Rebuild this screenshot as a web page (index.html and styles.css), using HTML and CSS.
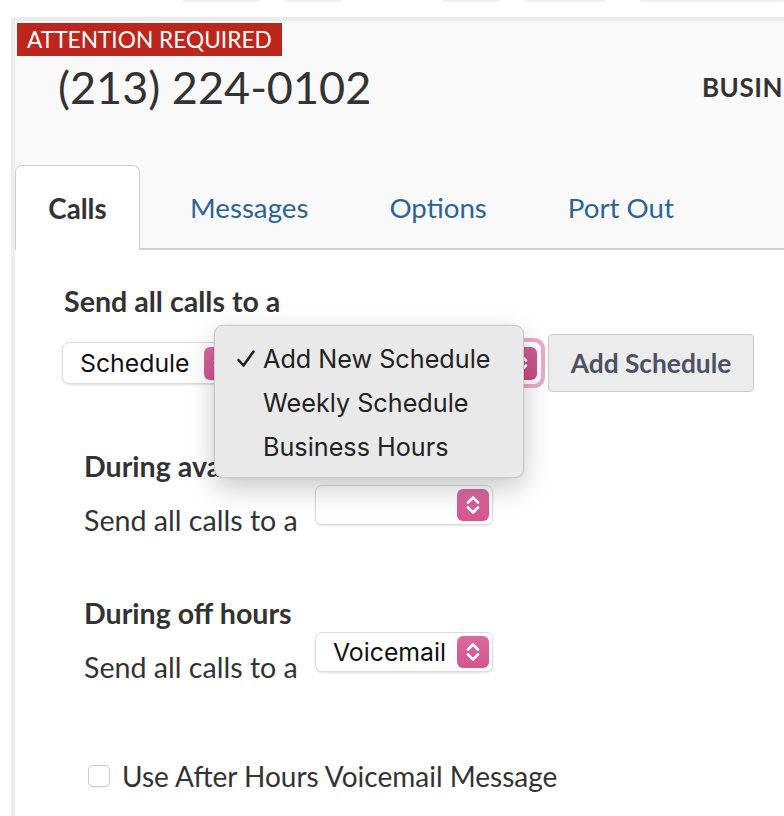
FILE: index.html
```html
<!DOCTYPE html>
<html lang="en">
<head>
<meta charset="utf-8">
<title>Number settings</title>
<link rel="stylesheet" href="styles.css">
</head>
<body>
<div class="topbar">
  <span class="pill p1"></span>
  <span class="pill p2"></span>
  <span class="pill p3"></span>
  <span class="pill p4"></span>
  <span class="pill p5"></span>
</div>
<div class="panel">
  <div class="panel-head">
    <div class="badge">ATTENTION REQUIRED</div>
    <div class="head-row">
      <div class="phone">(213) 224-0102</div>
      <div class="biz">BUSINESS</div>
    </div>
    <div class="tabs">
      <div class="tab active">Calls</div>
      <div class="tab">Messages</div>
      <div class="tab">Options</div>
      <div class="tab">Port Out</div>
    </div>
  </div>
  <div class="content">
    <div class="heading first">Send all calls to a</div>
    <div class="row-main">
      <div class="select sel-type">
        <span class="sel-text">Schedule</span>
        <span class="chev"><svg viewBox="0 0 32 32" width="32" height="32"><path d="M11 13.5 L16 8.5 L21 13.5 M11 18.5 L16 23.5 L21 18.5" fill="none" stroke="#fff" stroke-width="2.6" stroke-linecap="round" stroke-linejoin="round"/></svg></span>
      </div>
      <div class="select sel-sched focused">
        <span class="sel-text">Add New Schedule</span>
        <span class="chev"><svg viewBox="0 0 32 32" width="32" height="32"><path d="M11 13.5 L16 8.5 L21 13.5 M11 18.5 L16 23.5 L21 18.5" fill="none" stroke="#fff" stroke-width="2.6" stroke-linecap="round" stroke-linejoin="round"/></svg></span>
      </div>
      <div class="btn">Add Schedule</div>
      <div class="menu">
        <div class="menu-item"><span class="check"><svg viewBox="0 0 20 20" width="20" height="20"><path d="M2.5 11 L7.5 16.5 L17.5 2.5" fill="none" stroke="#222" stroke-width="2.6" stroke-linecap="round" stroke-linejoin="round"/></svg></span>Add New Schedule</div>
        <div class="menu-item"><span class="check"></span>Weekly Schedule</div>
        <div class="menu-item"><span class="check"></span>Business Hours</div>
      </div>
    </div>

    <div class="sub">
      <div class="heading">During available hours</div>
      <div class="line">
        <div class="label">Send all calls to a</div>
        <div class="select sel-small">
          <span class="sel-text"></span>
          <span class="chev"><svg viewBox="0 0 32 32" width="32" height="32"><path d="M11 13.5 L16 8.5 L21 13.5 M11 18.5 L16 23.5 L21 18.5" fill="none" stroke="#fff" stroke-width="2.6" stroke-linecap="round" stroke-linejoin="round"/></svg></span>
        </div>
      </div>

      <div class="heading off">During off hours</div>
      <div class="line second">
        <div class="label">Send all calls to a</div>
        <div class="select sel-small">
          <span class="sel-text">Voicemail</span>
          <span class="chev"><svg viewBox="0 0 32 32" width="32" height="32"><path d="M11 13.5 L16 8.5 L21 13.5 M11 18.5 L16 23.5 L21 18.5" fill="none" stroke="#fff" stroke-width="2.6" stroke-linecap="round" stroke-linejoin="round"/></svg></span>
        </div>
      </div>

      <label class="check-row">
        <span class="box"></span>
        <span>Use After Hours Voicemail Message</span>
      </label>
    </div>
  </div>
</div>
</body>
</html>
```
FILE: styles.css
```css
html, body {
  margin: 0;
  padding: 0;
  overflow: hidden;
}
body {
  font-family: Lato, "Open Sans", sans-serif;
  color: #333;
  background: #fff;
  width: 784px;
  height: 816px;
}

.topbar {
  height: 17px;
  position: relative;
  display: flex;
  align-items: flex-start;
}
.pill {
  display: block;
  height: 2px;
  background: #f1f1f1;
  border-radius: 0 0 6px 6px;
}
.p1 { margin-left: 182px; width: 78px; }
.p2 { margin-left: 25px; width: 58px; }
.p3 { margin-left: 100px; width: 57px; }
.p4 { margin-left: 25px; width: 80px; }
.p5 { margin-left: 35px; flex: 1; }

.panel {
  margin-left: 11px;
  border-top: 4px solid #ececec;
  border-left: 4px solid #ececec;
  height: 795px;
}
.panel-head {
  background: #f9f9f9;
  height: 229px;
  padding: 2px 0 0 2px;
  box-sizing: border-box;
  overflow: hidden;
  display: flex;
  flex-direction: column;
}
.badge {
  align-self: flex-start;
  background: #bc261b;
  color: #fff;
  font-size: 22.7px;
  height: 33px;
  line-height: 34px;
  padding: 0 11px 0 10px;
  width: 244px;
  white-space: nowrap;
}
.head-row {
  display: flex;
  align-items: center;
  height: 62px;
  white-space: nowrap;
}
.phone {
  flex: 0 0 685px;
  padding-left: 41px;
  box-sizing: border-box;
  font-size: 45px;
  color: #333;
  line-height: 62px;
}
.biz {
  font-size: 26px;
  font-weight: 700;
  letter-spacing: 0.5px;
  color: #333;
}
.tabs {
  margin-top: 47px;
  margin-left: -2px;
  display: flex;
  border-bottom: 2px solid #cfcfcf;
  height: 83px;
  box-sizing: content-box;
}
.tab {
  height: 85px;
  line-height: 86px;
  padding: 0 32px;
  margin-right: 17px;
  font-size: 27.7px;
  color: #2b6496;
  box-sizing: border-box;
  white-space: nowrap;
}
.tab.active {
  background: #fff;
  border: 1px solid #cfcfcf;
  border-bottom: none;
  border-radius: 7px 7px 0 0;
  color: #333;
  font-weight: 700;
  width: 125px;
  padding: 0;
  text-align: center;
  margin-bottom: -2px;
  margin-right: 18px;
  height: 87px;
  line-height: 86px;
}

.content {
  padding: 0 0 0 49px;
  background: #fff;
}
.heading {
  font-size: 28.6px;
  font-weight: 700;
  line-height: 36px;
  height: 36px;
  white-space: nowrap;
}
.heading.first {
  padding-top: 33px;
}

.row-main {
  position: relative;
  display: flex;
  align-items: center;
  margin-top: 15px;
  margin-left: -2px;
  height: 58px;
}
.select {
  position: relative;
  display: flex;
  align-items: center;
  background: #fff;
  border: 1px solid #dcdcdc;
  border-radius: 7px;
  box-shadow: 0 1px 2px rgba(0, 0, 0, 0.12);
  box-sizing: border-box;
  font-family: Inter, "Liberation Sans", sans-serif;
  font-size: 24.8px;
  color: #111;
}
.sel-text {
  flex: 1;
  padding-left: 17px;
  white-space: nowrap;
  overflow: hidden;
}
.chev {
  flex: none;
  width: 32px;
  height: 33px;
  margin-right: 3px;
  border-radius: 6px;
  background: linear-gradient(#d96c9f, #d5538f);
  display: flex;
  align-items: center;
  justify-content: center;
}
.chev svg { display: block; }
.sel-type {
  width: 178px;
  height: 42px;
}
.sel-sched {
  width: 293px;
  height: 42px;
  margin-left: 8px;
}
.focused {
  box-shadow: 0 0 0 4px #eba9c9;
  border-color: #fff;
}
.focused .chev {
  background: linear-gradient(#d05e95, #c94a85);
}
.btn {
  margin-left: 7px;
  width: 206px;
  height: 58px;
  box-sizing: border-box;
  background: #ececec;
  border: 1px solid #cbcbcb;
  border-radius: 4px;
  color: #4b5263;
  font-size: 26.3px;
  font-weight: 700;
  display: flex;
  align-items: center;
  justify-content: center;
  white-space: nowrap;
}
.menu {
  position: absolute;
  left: 152px;
  top: -9px;
  width: 310px;
  height: 153px;
  box-sizing: border-box;
  padding-top: 11px;
  background: #e9e9e9;
  border: 1px solid #c9c9c9;
  border-radius: 9px;
  box-shadow: 0 10px 28px rgba(0, 0, 0, 0.22), 0 0 2px rgba(0, 0, 0, 0.1);
  font-family: Inter, "Liberation Sans", sans-serif;
  font-size: 25.2px;
  color: #222;
  z-index: 2;
}
.menu-item {
  display: flex;
  align-items: center;
  height: 44px;
  white-space: nowrap;
}
.check {
  width: 27px;
  margin-left: 21px;
  height: 20px;
  display: flex;
  align-items: center;
}
.check svg { display: block; }

.sub {
  padding-left: 20px;
  margin-top: 56px;
}
.line {
  display: flex;
  align-items: flex-start;
  margin-top: 1px;
}
.line.second {
  margin-top: 1px;
}
.label {
  flex: 0 0 231px;
  font-size: 28.6px;
  line-height: 36px;
  margin-top: 17px;
  white-space: nowrap;
}
.sel-small {
  width: 178px;
  height: 40px;
}
.sel-small .chev {
  height: 32px;
}
.heading.off {
  margin-top: 57px;
}
.check-row {
  display: flex;
  align-items: center;
  margin-top: 73px;
  height: 36px;
  font-size: 28px;
  white-space: nowrap;
}
.box {
  width: 22px;
  height: 22px;
  box-sizing: border-box;
  border: 1px solid #c8c8c8;
  border-radius: 5px;
  background: #fff;
  margin-left: 4px;
  margin-right: 12px;
  box-shadow: 0 1px 1px rgba(0, 0, 0, 0.05);
}
```
